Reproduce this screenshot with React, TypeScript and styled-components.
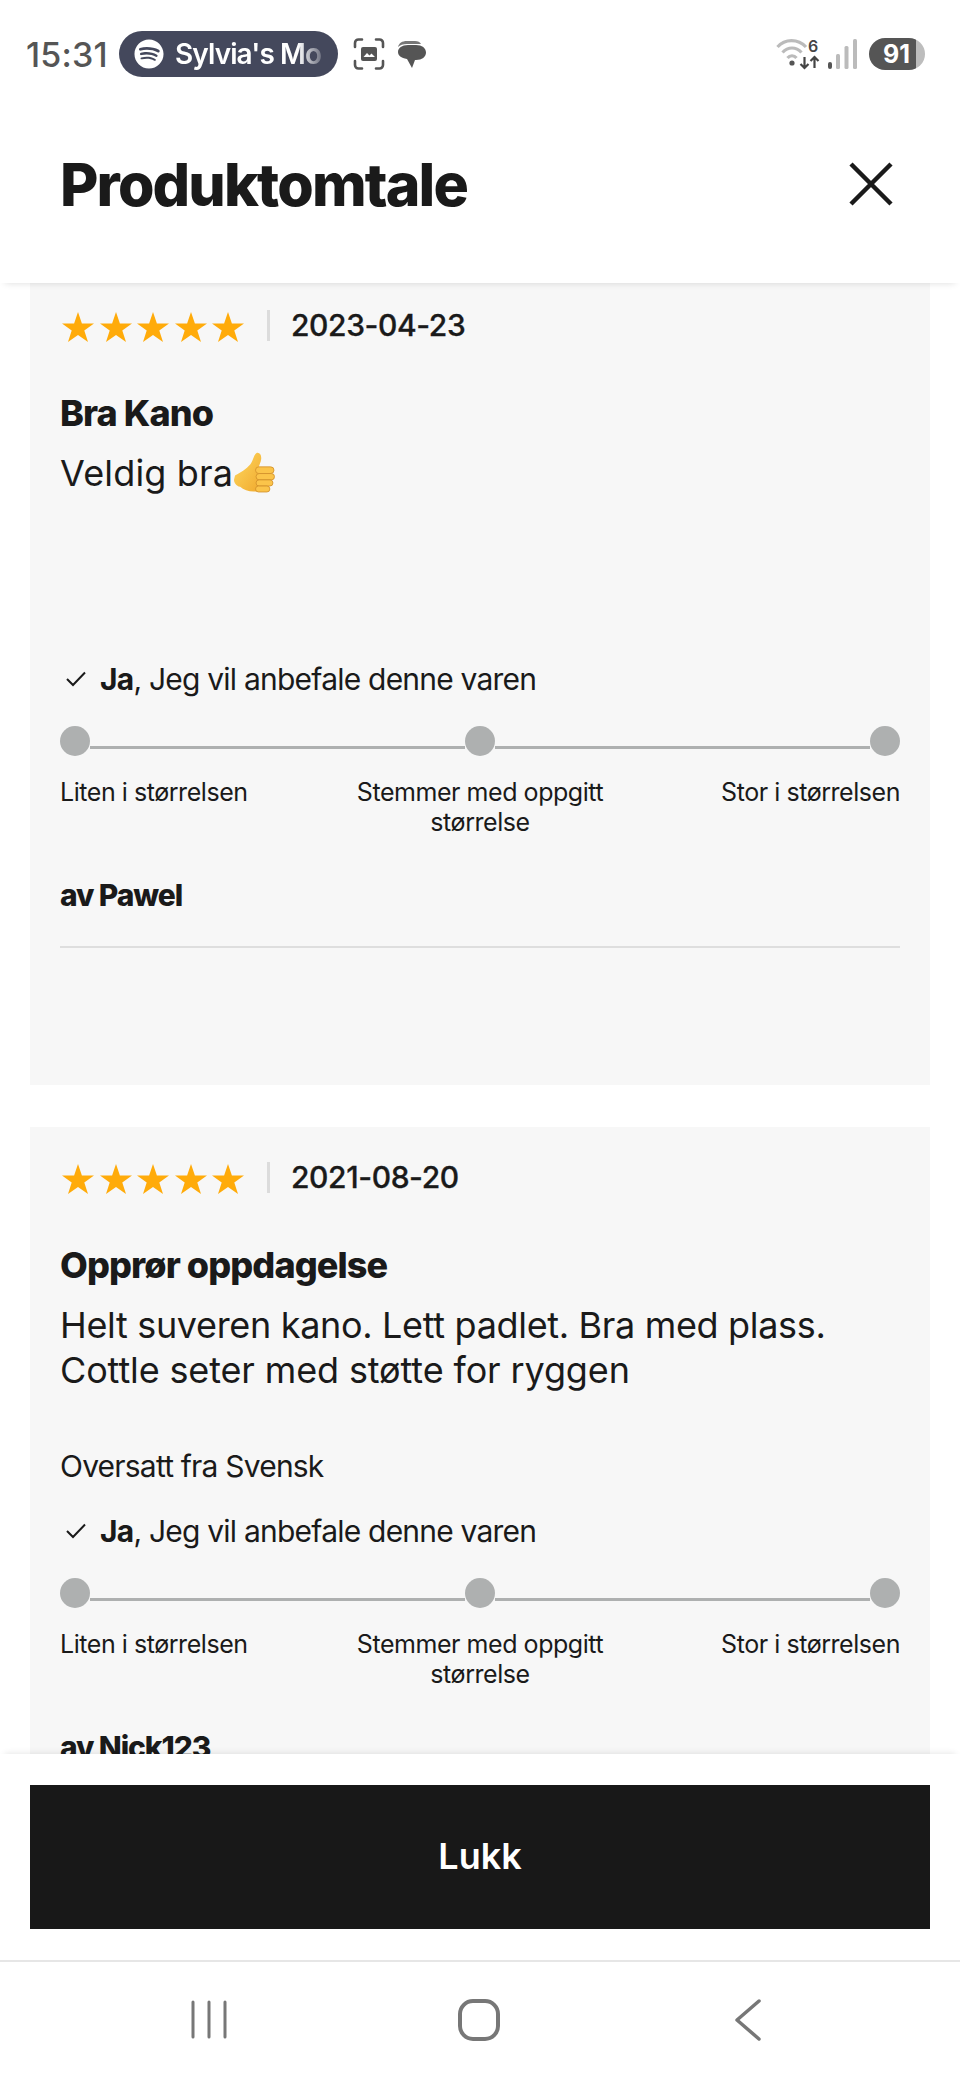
import { createGlobalStyle, styled } from 'styled-components';
import { FaSpotify } from 'react-icons/fa';

const GlobalStyle = createGlobalStyle`
  html, body {
    margin: 0;
    padding: 0;
    background: #fff;
  }
  body {
    font-family: Inter, "Liberation Sans", sans-serif;
    color: #1a1a1a;
  }
`;

const Page = styled.div`
  width: 960px;
  height: 2080px;
  display: flex;
  flex-direction: column;
  overflow: hidden;
  background: #fff;
`;

const StatusBar = styled.div`
  height: 108px;
  flex: none;
  display: flex;
  align-items: flex-start;
  padding: 31px 35px 0 26px;
  box-sizing: border-box;
  background: #fff;
`;

const Clock = styled.span`
  font-size: 34px;
  line-height: 47px;
  font-weight: 500;
  letter-spacing: 0.2px;
  color: #555;
  width: 93px;
  flex: none;
`;

const NowPlaying = styled.div`
  width: 219px;
  height: 46px;
  flex: none;
  border-radius: 23px;
  background: #44485c;
  display: flex;
  align-items: center;
  gap: 11px;
  padding-left: 15px;
  box-sizing: border-box;
  color: #fff;
`;

const NowPlayingText = styled.span`
  font-size: 28px;
  font-weight: 600;
  line-height: 46px;
  letter-spacing: -0.9px;
  white-space: nowrap;
  mask-image: linear-gradient(90deg, #000 84%, rgba(0, 0, 0, 0.25) 100%);
`;

const StatusIcons = styled.div`
  display: flex;
  align-items: center;
  gap: 12px;
  height: 46px;
  margin-left: 15px;
`;

const SystemIcons = styled.div`
  display: flex;
  align-items: center;
  height: 46px;
  margin-left: auto;
`;

const SignalIcon = styled.svg`
  margin-left: 4px;
`;

const Battery = styled.div`
  width: 56px;
  height: 32px;
  margin-left: 11px;
  border-radius: 16px;
  overflow: hidden;
  background: linear-gradient(90deg, #555 0 84%, #bdbdbd 84% 100%);
  color: #fff;
  font-size: 25px;
  font-weight: 700;
  line-height: 32px;
  padding-left: 14px;
  box-sizing: border-box;
`;

const Header = styled.header`
  height: 175px;
  flex: none;
  display: flex;
  align-items: flex-start;
  justify-content: space-between;
  padding: 42px 67px 0 60px;
  box-sizing: border-box;
  background: #fff;
  position: relative;
  z-index: 2;
  box-shadow: 0 5px 7px -5px rgba(0, 0, 0, 0.14);
`;

const Title = styled.h1`
  margin: 0;
  font-size: 59px;
  line-height: 70px;
  font-weight: 800;
  letter-spacing: -1.85px;
  color: #1a1a1a;
`;

const CloseButton = styled.button`
  border: 0;
  padding: 0;
  margin-top: 12px;
  background: none;
  display: flex;
  color: #1a1a1a;
`;

const Viewport = styled.main`
  flex: 1;
  min-height: 0;
  overflow: hidden;
`;

const ReviewList = styled.div`
  display: flex;
  flex-direction: column;
  gap: 42px;
  padding: 0 30px;
  margin-top: -8px;
`;

const Card = styled.article`
  background: #f7f7f7;
  padding: 30px 30px 137px;
`;

const RatingRow = styled.div`
  height: 40px;
  display: flex;
  align-items: center;
`;

const Stars = styled.div`
  display: flex;
  gap: 5.5px;
  padding: 3px 0 0 2px;
`;

const Separator = styled.span`
  width: 3px;
  height: 31px;
  margin: 0 21px 0 23px;
  background: #dcdcdc;
`;

const DateText = styled.time`
  font-size: 30px;
  line-height: 40px;
  font-weight: 500;
  letter-spacing: -0.4px;
  color: #1a1a1a;
  -webkit-text-stroke: 0.3px #1a1a1a;
`;

const ReviewTitle = styled.h2`
  margin: 46px 0 0;
  font-size: 36px;
  line-height: 44px;
  font-weight: 800;
  letter-spacing: -0.9px;
  color: #1a1a1a;
`;

const ReviewBody = styled.div`
  margin-top: 16px;
  min-height: 192px;
  display: flex;
  flex-direction: column;
`;

const BodyText = styled.p<{ $spacing: number }>`
  margin: 0;
  font-size: 36px;
  line-height: 45px;
  font-weight: 400;
  letter-spacing: ${(p) => p.$spacing}px;
  color: #1a1a1a;
`;

const ThumbIcon = styled.svg`
  width: 41px;
  height: 41px;
  margin-left: 1px;
  vertical-align: -7px;
`;

const Translation = styled.p`
  margin: auto 0 11px;
  font-size: 30px;
  line-height: 36px;
  letter-spacing: -0.8px;
  color: #1a1a1a;
`;

const RecommendRow = styled.div`
  margin-top: 18px;
  height: 36px;
  display: flex;
  align-items: center;
  font-size: 30px;
  line-height: 36px;
  letter-spacing: -0.78px;
  color: #1a1a1a;

  svg {
    margin: 0 14px 0 6px;
    flex: none;
  }

  strong {
    font-weight: 700;
  }
`;

const FitScale = styled.div`
  margin-top: 29px;
  display: flex;
`;

const ScaleDot = styled.span`
  width: 30px;
  height: 30px;
  flex: none;
  border-radius: 50%;
  background: #aeb0b0;
`;

const ScaleLine = styled.span`
  flex: 1;
  height: 3px;
  margin-top: 20px;
  background: #aeb0b0;
`;

const FitLabels = styled.div`
  margin-top: 21px;
  display: grid;
  grid-template-columns: 1fr 280px 1fr;
  font-size: 25px;
  line-height: 30px;
  letter-spacing: -0.45px;
  color: #1a1a1a;
`;

const FitLabel = styled.span<{ $align: 'left' | 'center' | 'right' }>`
  text-align: ${(p) => p.$align};
`;

const Author = styled.div`
  margin-top: 40px;
  font-size: 30px;
  line-height: 36px;
  font-weight: 800;
  letter-spacing: -1.1px;
  color: #1a1a1a;
`;

const Divider = styled.hr`
  margin: 33px 0 0;
  border: 0;
  height: 2px;
  background: #dedede;
`;

const Footer = styled.footer`
  height: 206px;
  flex: none;
  padding: 31px 30px 0;
  box-sizing: border-box;
  background: #fff;
  position: relative;
  z-index: 2;
  box-shadow: 0 -5px 7px -5px rgba(0, 0, 0, 0.12);
`;

const CloseAction = styled.button`
  width: 100%;
  height: 144px;
  border: 0;
  padding: 0 0 2px;
  background: #181818;
  color: #fff;
  font-family: inherit;
  font-size: 36px;
  font-weight: 600;
`;

const NavBar = styled.nav`
  height: 120px;
  flex: none;
  border-top: 2px solid #e6e6e6;
  box-sizing: border-box;
  display: grid;
  grid-template-columns: 267px 277px 1fr;
  padding: 37px 0 0 191px;
  background: #fff;
`;

const Star = () => (
  <svg width="32" height="30" viewBox="0 0 32 30" fill="#ffab0a">
    <path d="M16 0l3.9 11.4H32l-9.7 7.1L26 30l-10-7-10 7 3.7-11.5L0 11.4h12.1z" />
  </svg>
);

const CheckMark = () => (
  <svg width="20" height="16" viewBox="0 0 20 16" fill="none" stroke="#1a1a1a" strokeWidth="2">
    <path d="M1 8l6 6L19 1.5" />
  </svg>
);

const Thumb = () => (
  <ThumbIcon viewBox="0 0 40 40">
    <defs>
      <linearGradient id="thumbFill" x1="0" y1="0" x2="1" y2="1">
        <stop offset="0" stopColor="#ffd960" />
        <stop offset="1" stopColor="#f0a92e" />
      </linearGradient>
    </defs>
    <path
      d="M1 23C6 20 12 17 16 12C19 8 19 3 22 1C25 0 27 3 26.5 7C26 10 25 12 24 15L24 38C18 39.5 10 38 6 34C2 33 0 30 0 27Z"
      fill="url(#thumbFill)"
    />
    <g fill="#fbc44a" stroke="#d2902a" strokeWidth="0.8">
      <rect x="21" y="14.5" width="18" height="6.5" rx="3.2" />
      <rect x="21.5" y="21" width="18" height="6.2" rx="3.1" />
      <rect x="21.5" y="27.2" width="16.5" height="6" rx="3" />
      <rect x="21" y="33.2" width="14" height="5.8" rx="2.9" />
    </g>
  </ThumbIcon>
);

type Review = {
  date: string;
  title: string;
  lines: { text: string; spacing: number }[];
  emoji?: boolean;
  translated?: boolean;
  author: string;
};

const reviews: Review[] = [
  {
    date: '2023-04-23',
    title: 'Bra Kano',
    lines: [{ text: 'Veldig bra', spacing: 0.17 }],
    emoji: true,
    author: 'av Pawel',
  },
  {
    date: '2021-08-20',
    title: 'Opprør oppdagelse',
    lines: [
      { text: 'Helt suveren kano. Lett padlet. Bra med plass.', spacing: -0.33 },
      { text: 'Cottle seter med støtte for ryggen', spacing: -0.13 },
    ],
    translated: true,
    author: 'av Nick123',
  },
];

const ReviewCard = ({ review }: { review: Review }) => (
  <Card>
    <RatingRow>
      <Stars>
        {[0, 1, 2, 3, 4].map((i) => (
          <Star key={i} />
        ))}
      </Stars>
      <Separator />
      <DateText>{review.date}</DateText>
    </RatingRow>
    <ReviewTitle>{review.title}</ReviewTitle>
    <ReviewBody>
      {review.lines.map((line) => (
        <BodyText key={line.text} $spacing={line.spacing}>
          {line.text}
          {review.emoji && <Thumb />}
        </BodyText>
      ))}
      {review.translated && <Translation>Oversatt fra Svensk</Translation>}
    </ReviewBody>
    <RecommendRow>
      <CheckMark />
      <span>
        <strong>Ja</strong>, Jeg vil anbefale denne varen
      </span>
    </RecommendRow>
    <FitScale>
      <ScaleDot />
      <ScaleLine />
      <ScaleDot />
      <ScaleLine />
      <ScaleDot />
    </FitScale>
    <FitLabels>
      <FitLabel $align="left">Liten i størrelsen</FitLabel>
      <FitLabel $align="center">Stemmer med oppgitt størrelse</FitLabel>
      <FitLabel $align="right">Stor i størrelsen</FitLabel>
    </FitLabels>
    <Author>{review.author}</Author>
    <Divider />
  </Card>
);

export default function App() {
  return (
    <Page>
      <GlobalStyle />
      <StatusBar>
        <Clock>15:31</Clock>
        <NowPlaying>
          <FaSpotify size={30} />
          <NowPlayingText>Sylvia's Mo</NowPlayingText>
        </NowPlaying>
        <StatusIcons>
          <svg width="32" height="32" viewBox="0 0 32 32" fill="none" stroke="#555" strokeWidth="2.6" strokeLinecap="round">
            <path d="M2 9V5a3.5 3.5 0 0 1 3.5-3.5H9M23 1.5h3.5A3.5 3.5 0 0 1 30 5v4M30 23v4a3.5 3.5 0 0 1-3.5 3.5H23M9 30.5H5.5A3.5 3.5 0 0 1 2 27v-4" />
            <rect x="8" y="9" width="16" height="14" rx="2" fill="#555" stroke="none" />
            <path d="M10.5 19l3.5-4 2.5 2.5 2-2 3.5 3.5z" fill="#fff" stroke="none" />
          </svg>
          <svg width="29" height="28" viewBox="0 0 29 28">
            <path d="M1 7C2 3 5 1 10 1h8c3 0 5 1 6 3H10C6 4 3 5 1 7z" fill="#777" />
            <path d="M11 5h8c6 0 10 3 10 7.5S25 20 19 20h-1l-3 8-5-9C4 18 1 15.5 1 12c0-4 4-7 10-7z" fill="#555" />
          </svg>
        </StatusIcons>
        <SystemIcons>
          <svg width="46" height="34" viewBox="0 0 46 34" fill="none">
            <path d="M1.5 10C9 1.5 22 1.5 30 10" stroke="#bbb" strokeWidth="3.2" />
            <path d="M6.5 15.5C12 9.5 20 9.5 25.5 15.5" stroke="#bbb" strokeWidth="3.2" />
            <path d="M11.5 21C14 18 18 18 20.5 21" stroke="#bbb" strokeWidth="3.2" />
            <circle cx="16" cy="26" r="2.6" fill="#555" />
            <path d="M28.5 20v11M24.5 27l4 4 4-4M38.500 31V20M34.5 24l4-4 4 4" stroke="#444" strokeWidth="2.2" />
            <text x="32" y="15" fontSize="16" fontWeight="600" fill="#444" fontFamily="Inter, sans-serif">6</text>
          </svg>
          <SignalIcon width="32" height="32" viewBox="0 0 32 32">
            <rect x="2" y="24" width="4" height="7" rx="2" fill="#555" />
            <rect x="10" y="16" width="4" height="15" rx="1.5" fill="#bbb" />
            <rect x="18.5" y="8" width="4" height="23" rx="1.5" fill="#bbb" />
            <rect x="27" y="1" width="4" height="30" rx="1.5" fill="#bbb" />
          </SignalIcon>
          <Battery>91</Battery>
        </SystemIcons>
      </StatusBar>
      <Header>
        <Title>Produktomtale</Title>
        <CloseButton aria-label="Lukk">
          <svg width="44" height="44" viewBox="0 0 44 44" fill="none" stroke="currentColor" strokeWidth="4.5">
            <path d="M2 2l40 40M42 2L2 42" />
          </svg>
        </CloseButton>
      </Header>
      <Viewport>
        <ReviewList>
          {reviews.map((review) => (
            <ReviewCard key={review.date} review={review} />
          ))}
        </ReviewList>
      </Viewport>
      <Footer>
        <CloseAction>Lukk</CloseAction>
      </Footer>
      <NavBar>
        <svg width="36" height="40" viewBox="0 0 36 40" fill="none" stroke="#777" strokeWidth="3" strokeLinecap="round">
          <path d="M2 3v35M18 3v35M34 3v35" />
        </svg>
        <svg width="42" height="42" viewBox="0 0 42 42" fill="none" stroke="#777" strokeWidth="4">
          <rect x="2" y="2" width="38" height="38" rx="13" />
        </svg>
        <svg width="26" height="42" viewBox="0 0 26 42" fill="none" stroke="#777" strokeWidth="3.5" strokeLinecap="round" strokeLinejoin="round">
          <path d="M24 2L2 21l22 19" />
        </svg>
      </NavBar>
    </Page>
  );
}
